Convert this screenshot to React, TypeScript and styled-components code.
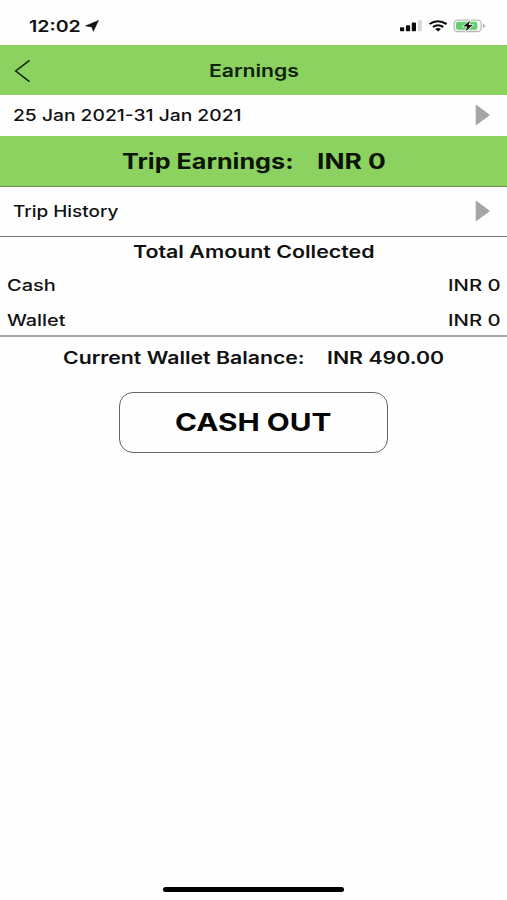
import React from "react";
import styled, { createGlobalStyle } from "styled-components";

const GlobalStyle = createGlobalStyle`
  * { box-sizing: border-box; }
  body { margin: 0; background: #fefefe; }
`;

const Screen = styled.main`
  display: flex;
  flex-direction: column;
  width: 507px;
  height: 900px;
  overflow: hidden;
  background: #fefefe;
  color: #111;
  font-family: Inter, "Liberation Sans", sans-serif;
`;

const LabelBox = styled.span<{ $width: number; $size: number; $weight: number }>`
  display: block;
  flex: none;
  width: ${(p) => p.$width}px;
  font-size: ${(p) => p.$size}px;
  font-weight: ${(p) => p.$weight};
  line-height: 24px;
  text-align: left;
  white-space: nowrap;
`;

const Wide = styled.span<{ $stretch: number }>`
  display: inline-block;
  transform: scaleX(${(p) => p.$stretch});
  transform-origin: left center;
`;

type LabelProps = {
  children: string;
  width: number;
  stretch: number;
  size?: number;
  weight?: number;
};

const Label = ({ children, width, stretch, size = 16, weight = 500 }: LabelProps) => (
  <LabelBox $width={width} $size={size} $weight={weight}>
    <Wide $stretch={stretch}>{children}</Wide>
  </LabelBox>
);

const StatusBar = styled.div`
  display: flex;
  align-items: center;
  height: 45px;
  padding: 7px 20px 0 29px;
`;

const StatusIcons = styled.div`
  display: flex;
  margin-left: auto;
`;

const NavBar = styled.header`
  display: grid;
  grid-template-columns: 60px 1fr 60px;
  align-items: center;
  justify-items: center;
  height: 50px;
  padding-top: 1px;
  background: #8bd260;
  color: #10210a;
`;

const BackButton = styled.button`
  display: flex;
  justify-self: start;
  padding: 0 0 0 14px;
  border: 0;
  background: none;
`;

const LinkRow = styled.div<{ $height: number }>`
  display: flex;
  align-items: center;
  justify-content: space-between;
  height: ${(p) => p.$height}px;
  padding: 0 16px 2px 13px;
`;

const Banner = styled.section`
  display: flex;
  align-items: center;
  justify-content: center;
  gap: 22px;
  height: 51px;
  padding-top: 1px;
  border-bottom: 1px solid #6d8a60;
  background: #8bd260;
  color: #0b1406;
`;

const Collected = styled.section`
  display: flex;
  flex-direction: column;
  height: 101px;
  padding-top: 3px;
  border-top: 1px solid #777;
  border-bottom: 2px solid #a3a3a3;
`;

const SectionTitle = styled.div`
  display: flex;
  justify-content: center;
  height: 24px;
  margin-bottom: 9px;
`;

const AmountList = styled.div`
  display: flex;
  flex-direction: column;
  gap: 11px;
  padding: 0 6px 0 7px;
`;

const AmountRow = styled.div`
  display: flex;
  justify-content: space-between;
  height: 24px;
`;

const Balance = styled.div`
  display: flex;
  align-items: center;
  justify-content: center;
  gap: 22px;
  height: 41px;
`;

const CashOutButton = styled.button`
  display: flex;
  align-items: center;
  justify-content: center;
  align-self: center;
  width: 269px;
  height: 61px;
  margin-top: 14px;
  padding: 0;
  border: 1px solid #666;
  border-radius: 14px;
  background: #fefefe;
  color: #050505;
  font-family: inherit;
`;

const HomeIndicator = styled.div`
  width: 181px;
  height: 5px;
  margin: auto auto 8px;
  border-radius: 3px;
  background: #000;
`;

const LocationIcon = () => (
  <svg width="14" height="12" viewBox="0 0 14 12">
    <path d="M13.5.5 8.3 11.3 6.9 6.9.5 5.9z" fill="#111" stroke="#111" strokeWidth=".6" strokeLinejoin="round" />
  </svg>
);

const StatusGlyphs = () => (
  <svg width="90" height="16" viewBox="0 0 90 16">
    <g fill="#0c0c0c">
      <rect x="3" y="9.2" width="4.2" height="4" rx=".8" />
      <rect x="8.9" y="7.2" width="4.2" height="6" rx=".8" />
      <rect x="14.8" y="4.6" width="4.2" height="8.6" rx=".8" />
    </g>
    <rect x="20.9" y="2.3" width="3.9" height="10.9" rx=".8" fill="#d6d6d6" />
    <g fill="none" stroke="#0c0c0c" strokeWidth="2.1">
      <path d="M32.6 6q8-5.5 17 0" />
      <path d="M35.9 9q5.1-3.4 10.4 0" />
    </g>
    <path d="M38.2 11.1q2.9-2 5.8 0l-2.9 2.5z" fill="#0c0c0c" />
    <rect x="57.2" y="2.1" width="27" height="11.4" rx="3.6" fill="none" stroke="#b9b9b9" strokeWidth="1.3" />
    <path d="M86 6v4q2-.5 2-2t-2-2" fill="#aaa" />
    <rect x="59" y="3.8" width="21.3" height="8" rx="2" fill="#62cf6b" />
    <path d="m73 2.6-6.8 6h4l-1.5 4.7 7-6.2h-4z" fill="#111" stroke="#fff" strokeWidth="1.3" paintOrder="stroke" />
  </svg>
);

const BackIcon = () => (
  <svg width="18" height="24" viewBox="0 0 18 24">
    <path d="M15.5 1.3 1.7 12l13.8 10.7" fill="none" stroke="#10210a" strokeWidth="1.5" />
  </svg>
);

const Arrow = () => (
  <svg width="16" height="22" viewBox="0 0 16 22">
    <path d="M1.2 1.2 14.4 11 1.2 20.8z" fill="#a5a5a5" stroke="#a5a5a5" strokeWidth="1" strokeLinejoin="round" />
  </svg>
);

const amounts = [
  { name: "Cash", width: 50, stretch: 1.25 },
  { name: "Wallet", width: 59, stretch: 1.24 },
];

export default function App() {
  return (
    <>
      <GlobalStyle />
      <Screen>
        <StatusBar>
          <Label width={56} stretch={1.22} weight={600}>12:02</Label>
          <LocationIcon />
          <StatusIcons>
            <StatusGlyphs />
          </StatusIcons>
        </StatusBar>
        <NavBar>
          <BackButton aria-label="Back">
            <BackIcon />
          </BackButton>
          <Label width={90} stretch={1.245} size={17} weight={600}>Earnings</Label>
        </NavBar>
        <LinkRow $height={41}>
          <Label width={230} stretch={1.203}>25 Jan 2021-31 Jan 2021</Label>
          <Arrow />
        </LinkRow>
        <Banner>
          <Label width={173} stretch={1.2} size={21} weight={700}>Trip Earnings:</Label>
          <Label width={69} stretch={1.255} size={21} weight={700}>INR 0</Label>
        </Banner>
        <LinkRow $height={49}>
          <Label width={105} stretch={1.18}>Trip History</Label>
          <Arrow />
        </LinkRow>
        <Collected>
          <SectionTitle>
            <Label width={242} stretch={1.257} size={17} weight={600}>Total Amount Collected</Label>
          </SectionTitle>
          <AmountList>
            {amounts.map((a) => (
              <AmountRow key={a.name}>
                <Label width={a.width} stretch={a.stretch}>{a.name}</Label>
                <Label width={53} stretch={1.27}>INR 0</Label>
              </AmountRow>
            ))}
          </AmountList>
        </Collected>
        <Balance>
          <Label width={242} stretch={1.25} size={17} weight={600}>Current Wallet Balance:</Label>
          <Label width={117} stretch={1.255} size={17} weight={600}>INR 490.00</Label>
        </Balance>
        <CashOutButton>
          <Label width={157} stretch={1.24} size={24} weight={700}>CASH OUT</Label>
        </CashOutButton>
        <HomeIndicator />
      </Screen>
    </>
  );
}
